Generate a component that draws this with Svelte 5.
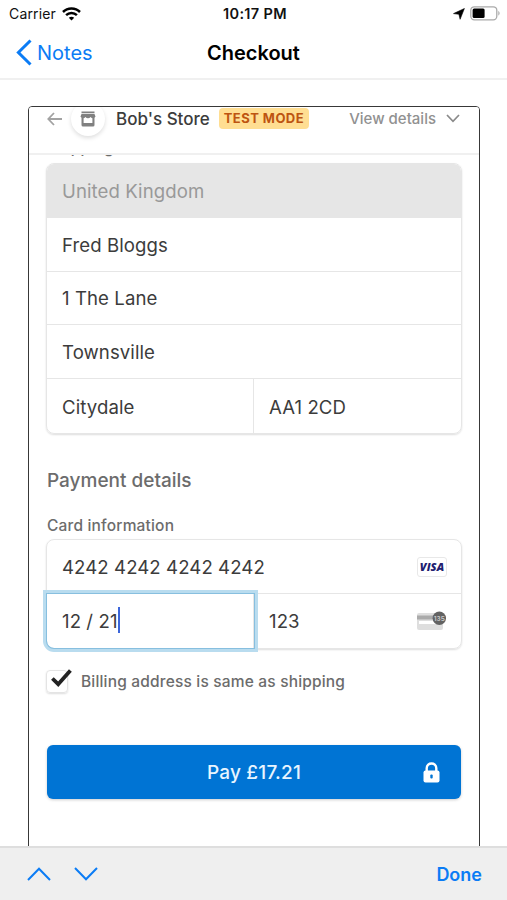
<script lang="ts">
	let country = $state('United Kingdom');
	let addressLines = $state(['Fred Bloggs', '1 The Lane', 'Townsville']);
	let city = $state('Citydale');
	let postcode = $state('AA1 2CD');
	let card = $state({ number: '4242 4242 4242 4242', expiry: '12 / 21', cvc: '123' });
	let sameAddress = $state(true);
</script>

<div class="screen">
	<div class="status">
		<div class="carrier">
			<span>Carrier</span>
			<svg width="19" height="14" viewBox="0 0 19 14" fill="none" stroke="#000" stroke-width="2.5">
				<path d="M1 5C5.6.4 13.4.4 18 5" />
				<path d="M4.1 8.2C7.1 5.3 11.9 5.3 14.9 8.2" />
				<path d="M9.5 13.6 6.8 10.8Q9.5 8.5 12.2 10.8Z" fill="#000" stroke="none" />
			</svg>
		</div>
		<span class="time">10:17 PM</span>
		<div class="power">
			<svg width="12" height="12" viewBox="0 0 12 12"><path d="M11.4.5 7.1 11.3 5.9 6.3.5 5.6Z" fill="#000" stroke="#000" stroke-width=".6" /></svg>
			<svg width="31" height="15" viewBox="0 0 31 15">
				<rect x=".8" y=".8" width="26" height="13" rx="3.5" fill="#fff" stroke="#aaa" stroke-width="1.3" />
				<rect x="2.6" y="2.5" width="12" height="9.6" rx="1.5" fill="#000" />
				<path d="M28.3 4.8Q31 7.3 28.3 9.8Z" fill="#aaa" />
			</svg>
		</div>
	</div>

	<nav>
		<button type="button" class="back">
			<svg width="16" height="27" viewBox="0 0 16 27" fill="none" stroke="#0b7cf5" stroke-width="3"><path d="M14.5 1.5 2.4 13.5 14.5 25.5" /></svg>
			<span>Notes</span>
		</button>
		<h1>Checkout</h1>
	</nav>

	<main>
		<div class="frame">
			<header>
				<svg width="15" height="14" viewBox="0 0 15 14" fill="none" stroke="#a2a2a2" stroke-width="1.8"><path d="M7 1 1.3 7 7 13M1.3 7H15" /></svg>
				<div class="logo">
					<svg width="16" height="16" viewBox="0 0 16 16" fill="#808080">
						<path d="M1.5.5H14.5V2.2H1.5ZM1.5 3H14.5L15.5 5.5Q15 7.3 13.2 7.3 11.4 7.3 10.6 6 9.5 7.3 8 7.3 6.5 7.3 5.4 6 4.6 7.3 2.8 7.3 1 7.3.5 5.5Z" />
						<path fill-rule="evenodd" d="M1.5 7H14.5V14Q14.5 15.5 13 15.5H3Q1.5 15.5 1.5 14ZM3.6 7V12H12.4V7Z" />
					</svg>
				</div>
				<span class="store">Bob's Store</span>
				<span class="badge">TEST MODE</span>
				<span class="details">View details</span>
				<svg class="chevron" width="14" height="9" viewBox="0 0 14 9" fill="none" stroke="#8a8a8a" stroke-width="1.7"><path d="M1 1 7 7.3 13 1" /></svg>
			</header>

			<section class="content">
				<h3 class="shipping">Shipping information</h3>
				<div class="group">
					<div class="field disabled">{country}</div>
					{#each addressLines as line}
						<div class="field">{line}</div>
					{/each}
					<div class="split">
						<div class="field">{city}</div>
						<div class="field">{postcode}</div>
					</div>
				</div>

				<h2>Payment details</h2>
				<h3>Card information</h3>
				<div class="group">
					<div class="field">
						<span class="number">{card.number}</span>
						<span class="visa">VISA</span>
					</div>
					<div class="split">
						<div class="field focused">{card.expiry}<i class="caret"></i></div>
						<div class="field">
							<span>{card.cvc}</span>
							<svg class="cvc" width="31" height="20" viewBox="0 0 31 20">
								<rect x="1" y="2" width="26" height="17" rx="2" fill="#dedede" />
								<rect x="1" y="4.5" width="26" height="4" fill="#aaa" />
								<rect x="3" y="10" width="22" height="3" fill="#fff" />
								<circle cx="23.3" cy="7.3" r="6.7" fill="#626262" />
								<text x="23.3" y="9.8" text-anchor="middle">135</text>
							</svg>
						</div>
					</div>
				</div>

				<button type="button" class="same" onclick={() => (sameAddress = !sameAddress)}>
					<span class="box">
						{#if sameAddress}
							<svg width="21" height="18" viewBox="0 0 21 18" fill="none" stroke="#222" stroke-width="3.8"><path d="M1.4 9.5 7.2 15.2 19.4 1.4" /></svg>
						{/if}
					</span>
					<span>Billing address is same as shipping</span>
				</button>

				<button type="button" class="pay">
					<span>Pay £17.21</span>
					<svg width="17" height="21" viewBox="0 0 17 21">
						<path d="M3.7 10V6.2C3.7-.1 13.3-.1 13.3 6.2V10" fill="none" stroke="#fff" stroke-width="2.4" />
						<rect x=".5" y="8.5" width="16" height="12" rx="2" fill="#fff" />
						<rect x="7.3" y="12.4" width="2.4" height="4.2" rx="1" fill="#0074d4" />
					</svg>
				</button>
			</section>
		</div>
	</main>

	<footer>
		<svg width="24" height="14" viewBox="0 0 24 14" fill="none" stroke="#0b7cf5" stroke-width="2"><path d="M1 13 12 1.7 23 13" /></svg>
		<svg width="24" height="14" viewBox="0 0 24 14" fill="none" stroke="#0b7cf5" stroke-width="2"><path d="M1 1 12 12.3 23 1" /></svg>
		<button type="button" class="done">Done</button>
	</footer>
</div>

<style>
	:global(body) {
		background: #fff;
	}

	.screen {
		width: 507px;
		height: 900px;
		display: flex;
		flex-direction: column;
		overflow: hidden;
		font-family: Inter, 'Liberation Sans', sans-serif;
		color: #3c3c3c;
	}

	.screen * {
		box-sizing: border-box;
	}

	button {
		border: 0;
		padding: 0;
		background: none;
		font: inherit;
		color: inherit;
	}

	svg {
		display: block;
		flex: none;
	}

	.status {
		height: 27px;
		display: grid;
		grid-template-columns: 1fr auto 1fr;
		align-items: center;
		padding: 0 6px 0 9px;
		font-size: 14px;
		color: #111;
	}

	.carrier,
	.power {
		display: flex;
		align-items: center;
		gap: 6px;
	}

	.carrier {
		letter-spacing: 0.15px;
	}

	.power {
		justify-content: flex-end;
		gap: 5px;
	}

	.time {
		font-weight: 600;
		font-size: 14.5px;
		letter-spacing: 0.35px;
	}

	nav {
		height: 53px;
		display: grid;
		grid-template-columns: 1fr auto 1fr;
		align-items: center;
		padding: 0 16px;
		border-bottom: 2px solid #f0f0f0;
	}

	.back {
		display: flex;
		align-items: center;
		gap: 5px;
		color: #0b7cf5;
		font-size: 20px;
	}

	h1 {
		margin: 0;
		font-size: 20px;
		font-weight: 600;
		color: #000;
	}

	main {
		flex: 1;
		min-height: 0;
		padding: 26px 27px 0 28px;
	}

	.frame {
		height: 760px;
		overflow: hidden;
		border: 1px solid #383838;
		border-radius: 4px;
	}

	header {
		position: relative;
		height: 72px;
		margin-top: -24px;
		display: flex;
		align-items: center;
		padding: 1px 19px 0 18px;
		background: #fff;
		border-bottom: 2px solid #f0f0f0;
	}

	.logo {
		width: 34px;
		height: 34px;
		margin: 0 10px 0 9px;
		display: grid;
		place-items: center;
		border-radius: 50%;
		box-shadow: 0 2px 4px #0002;
	}

	.store {
		margin-left: 1px;
		font-size: 17px;
		font-weight: 500;
	}

	.badge {
		margin-left: 9px;
		padding: 0 5px;
		height: 21px;
		line-height: 21px;
		border-radius: 4px;
		background: #ffde92;
		color: #bd5411;
		font-size: 13px;
		font-weight: 700;
		letter-spacing: 0.45px;
	}

	.details {
		margin-left: auto;
		font-size: 15px;
		font-weight: 500;
		color: #919191;
	}

	.chevron {
		margin-left: 10px;
	}

	.content {
		padding: 0 17px;
	}

	h3 {
		margin: 0;
		font-size: 15.5px;
		line-height: 20px;
		font-weight: 500;
		letter-spacing: 0.18px;
		color: #6c6c6c;
	}

	.shipping {
		margin-top: -17px;
		margin-bottom: 5px;
		padding-left: 1px;
	}

	.group {
		border: 1px solid #e6e6e6;
		border-radius: 8px;
		box-shadow: 0 1px 2px #0002;
	}

	.field {
		height: 53.8px;
		display: flex;
		align-items: center;
		padding: 1px 14px 0 15px;
		font-size: 18.6px;
		letter-spacing: 0.08px;
		border-bottom: 1px solid #e6e6e6;
	}

	.field.disabled {
		background: #e6e6e6;
		color: #999;
		border-radius: 7px 7px 0 0;
	}

	.split {
		display: grid;
		grid-template-columns: 206px 1fr;
	}

	.split .field {
		border-bottom: 0;
	}

	.split .field + .field {
		border-left: 1px solid #e6e6e6;
	}

	.field.focused {
		margin-right: -1px;
		border-radius: 0 0 0 7px;
		box-shadow: 0 0 0 1px #87bfdf, 0 0 0 4px #b9dcef;
	}

	.caret {
		width: 2px;
		height: 26px;
		margin-top: -3px;
		background: #3c66da;
	}

	h2 {
		margin: 35px 0 22px 1px;
		font-size: 19px;
		line-height: 24px;
		font-weight: 500;
		color: #6c6c6c;
	}

	h2 + h3 {
		padding-top: 1px;
		margin: 0 0 3px 1px;
	}

	.visa {
		width: 30px;
		height: 20px;
		margin-left: auto;
		display: grid;
		place-items: center;
		border: 1px solid #e8e8e8;
		border-radius: 3px;
		font: italic 800 11px 'Open Sans', sans-serif;
		color: #20206f;
	}

	.cvc {
		margin-left: auto;
	}

	.cvc text {
		font-size: 6.5px;
		font-weight: 600;
		letter-spacing: 0;
		fill: #ccc;
	}

	.same {
		display: flex;
		align-items: center;
		gap: 13px;
		margin-top: 21px;
		font-size: 15.5px;
		font-weight: 500;
		letter-spacing: 0.18px;
		color: #6c6c6c;
	}

	.box {
		position: relative;
		width: 22px;
		height: 23px;
		border: 1px solid #e4e4e4;
		border-radius: 4px;
		box-shadow: 0 1px 2px #0002;
	}

	.box svg {
		position: absolute;
		left: 4px;
		top: -2px;
	}

	.pay {
		position: relative;
		width: 414px;
		height: 54px;
		margin: 52px 0 0 1px;
		padding-top: 2px;
		display: grid;
		place-items: center;
		border-radius: 6px;
		background: #0074d4;
		box-shadow: 0 1px 3px #0003;
		color: #e9f5ff;
		font-size: 19px;
		font-weight: 500;
		letter-spacing: 0.2px;
	}

	.pay svg {
		position: absolute;
		right: 21px;
		top: 17px;
	}

	footer {
		height: 54px;
		display: flex;
		align-items: center;
		gap: 23px;
		padding: 0 25px 0 27px;
		background: #efefef;
		border-top: 2px solid #dedede;
		/* keeps the bar above the clipped page */
		z-index: 1;
	}

	.done {
		margin-left: auto;
		font-size: 18px;
		font-weight: 600;
		color: #0b7cf5;
	}
</style>
